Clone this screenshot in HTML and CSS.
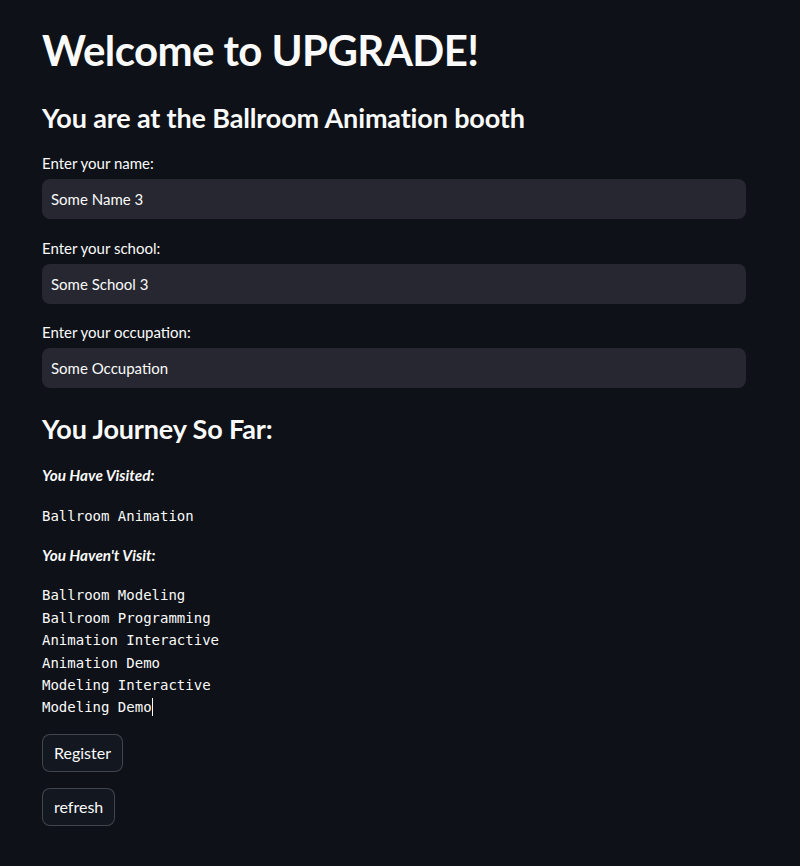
FILE: index.html
```html
<!DOCTYPE html>
<html>
<head>
<meta charset="utf-8">
<link rel="stylesheet" href="styles.css">
</head>
<body>
<main class="main">
  <h1 class="title">Welcome to UPGRADE!</h1>
  <h3 class="subtitle">You are at the Ballroom Animation booth</h3>

  <div class="field">
    <label class="label">Enter your name:</label>
    <div class="input">Some Name 3</div>
  </div>
  <div class="field">
    <label class="label">Enter your school:</label>
    <div class="input">Some School 3</div>
  </div>
  <div class="field field-last">
    <label class="label">Enter your occupation:</label>
    <div class="input">Some Occupation</div>
  </div>

  <h3 class="subtitle journey">You Journey So Far:</h3>
  <p class="em">You Have Visited:</p>
  <pre class="code">Ballroom Animation</pre>
  <p class="em">You Haven't Visit:</p>
  <pre class="code code-last">Ballroom Modeling
Ballroom Programming
Animation Interactive
Animation Demo
Modeling Interactive
Modeling Demo<span class="caret"></span></pre>

  <div class="buttons">
    <button class="btn">Register</button>
    <button class="btn">refresh</button>
  </div>
</main>
</body>
</html>
```

FILE: styles.css
```css
html, body {
  margin: 0;
  padding: 0;
  background: #0e1117;
  color: #fafafa;
  font-family: "Lato", "Noto Sans", sans-serif;
}

.main {
  width: 704px;
  padding: 24px 0 0 42px;
  display: flex;
  flex-direction: column;
}

.title {
  margin: 0;
  font-size: 42px;
  font-weight: 700;
  line-height: 52px;
  letter-spacing: -0.6px;
}

.subtitle {
  margin: 24px 0 0;
  font-size: 27px;
  font-weight: 700;
  line-height: 36px;
  letter-spacing: -0.15px;
}

.field {
  display: flex;
  flex-direction: column;
  margin-top: 17px;
}

.field + .field {
  margin-top: 19px;
}

.field + .field-last {
  margin-top: 18px;
}

.label {
  font-size: 15px;
  line-height: 20px;
  margin-bottom: 6px;
}

.input {
  height: 40px;
  background: #262730;
  border-radius: 8px;
  padding: 0 9px;
  font-size: 15px;
  line-height: 40px;
}

.journey {
  margin-top: 23px;
}

.em {
  margin: 16px 0 0;
  font-size: 15.3px;
  font-weight: 700;
  font-style: italic;
  line-height: 24px;
}

.code {
  margin: 18px 0 0;
  font-family: "DejaVu Sans Mono", monospace;
  font-size: 14px;
  line-height: 22.4px;
}

.code-last {
  margin-top: 17px;
}

.caret {
  display: inline-block;
  width: 1px;
  height: 18px;
  background: #fafafa;
  vertical-align: -4px;
}

.buttons {
  display: flex;
  flex-direction: column;
  align-items: flex-start;
  gap: 16px;
  margin-top: 15px;
}

.btn {
  height: 38px;
  padding: 0 11px;
  background: #131720;
  color: #fafafa;
  border: 1px solid rgba(250, 250, 250, 0.2);
  border-radius: 8px;
  font-family: inherit;
  font-size: 16px;
}
```
